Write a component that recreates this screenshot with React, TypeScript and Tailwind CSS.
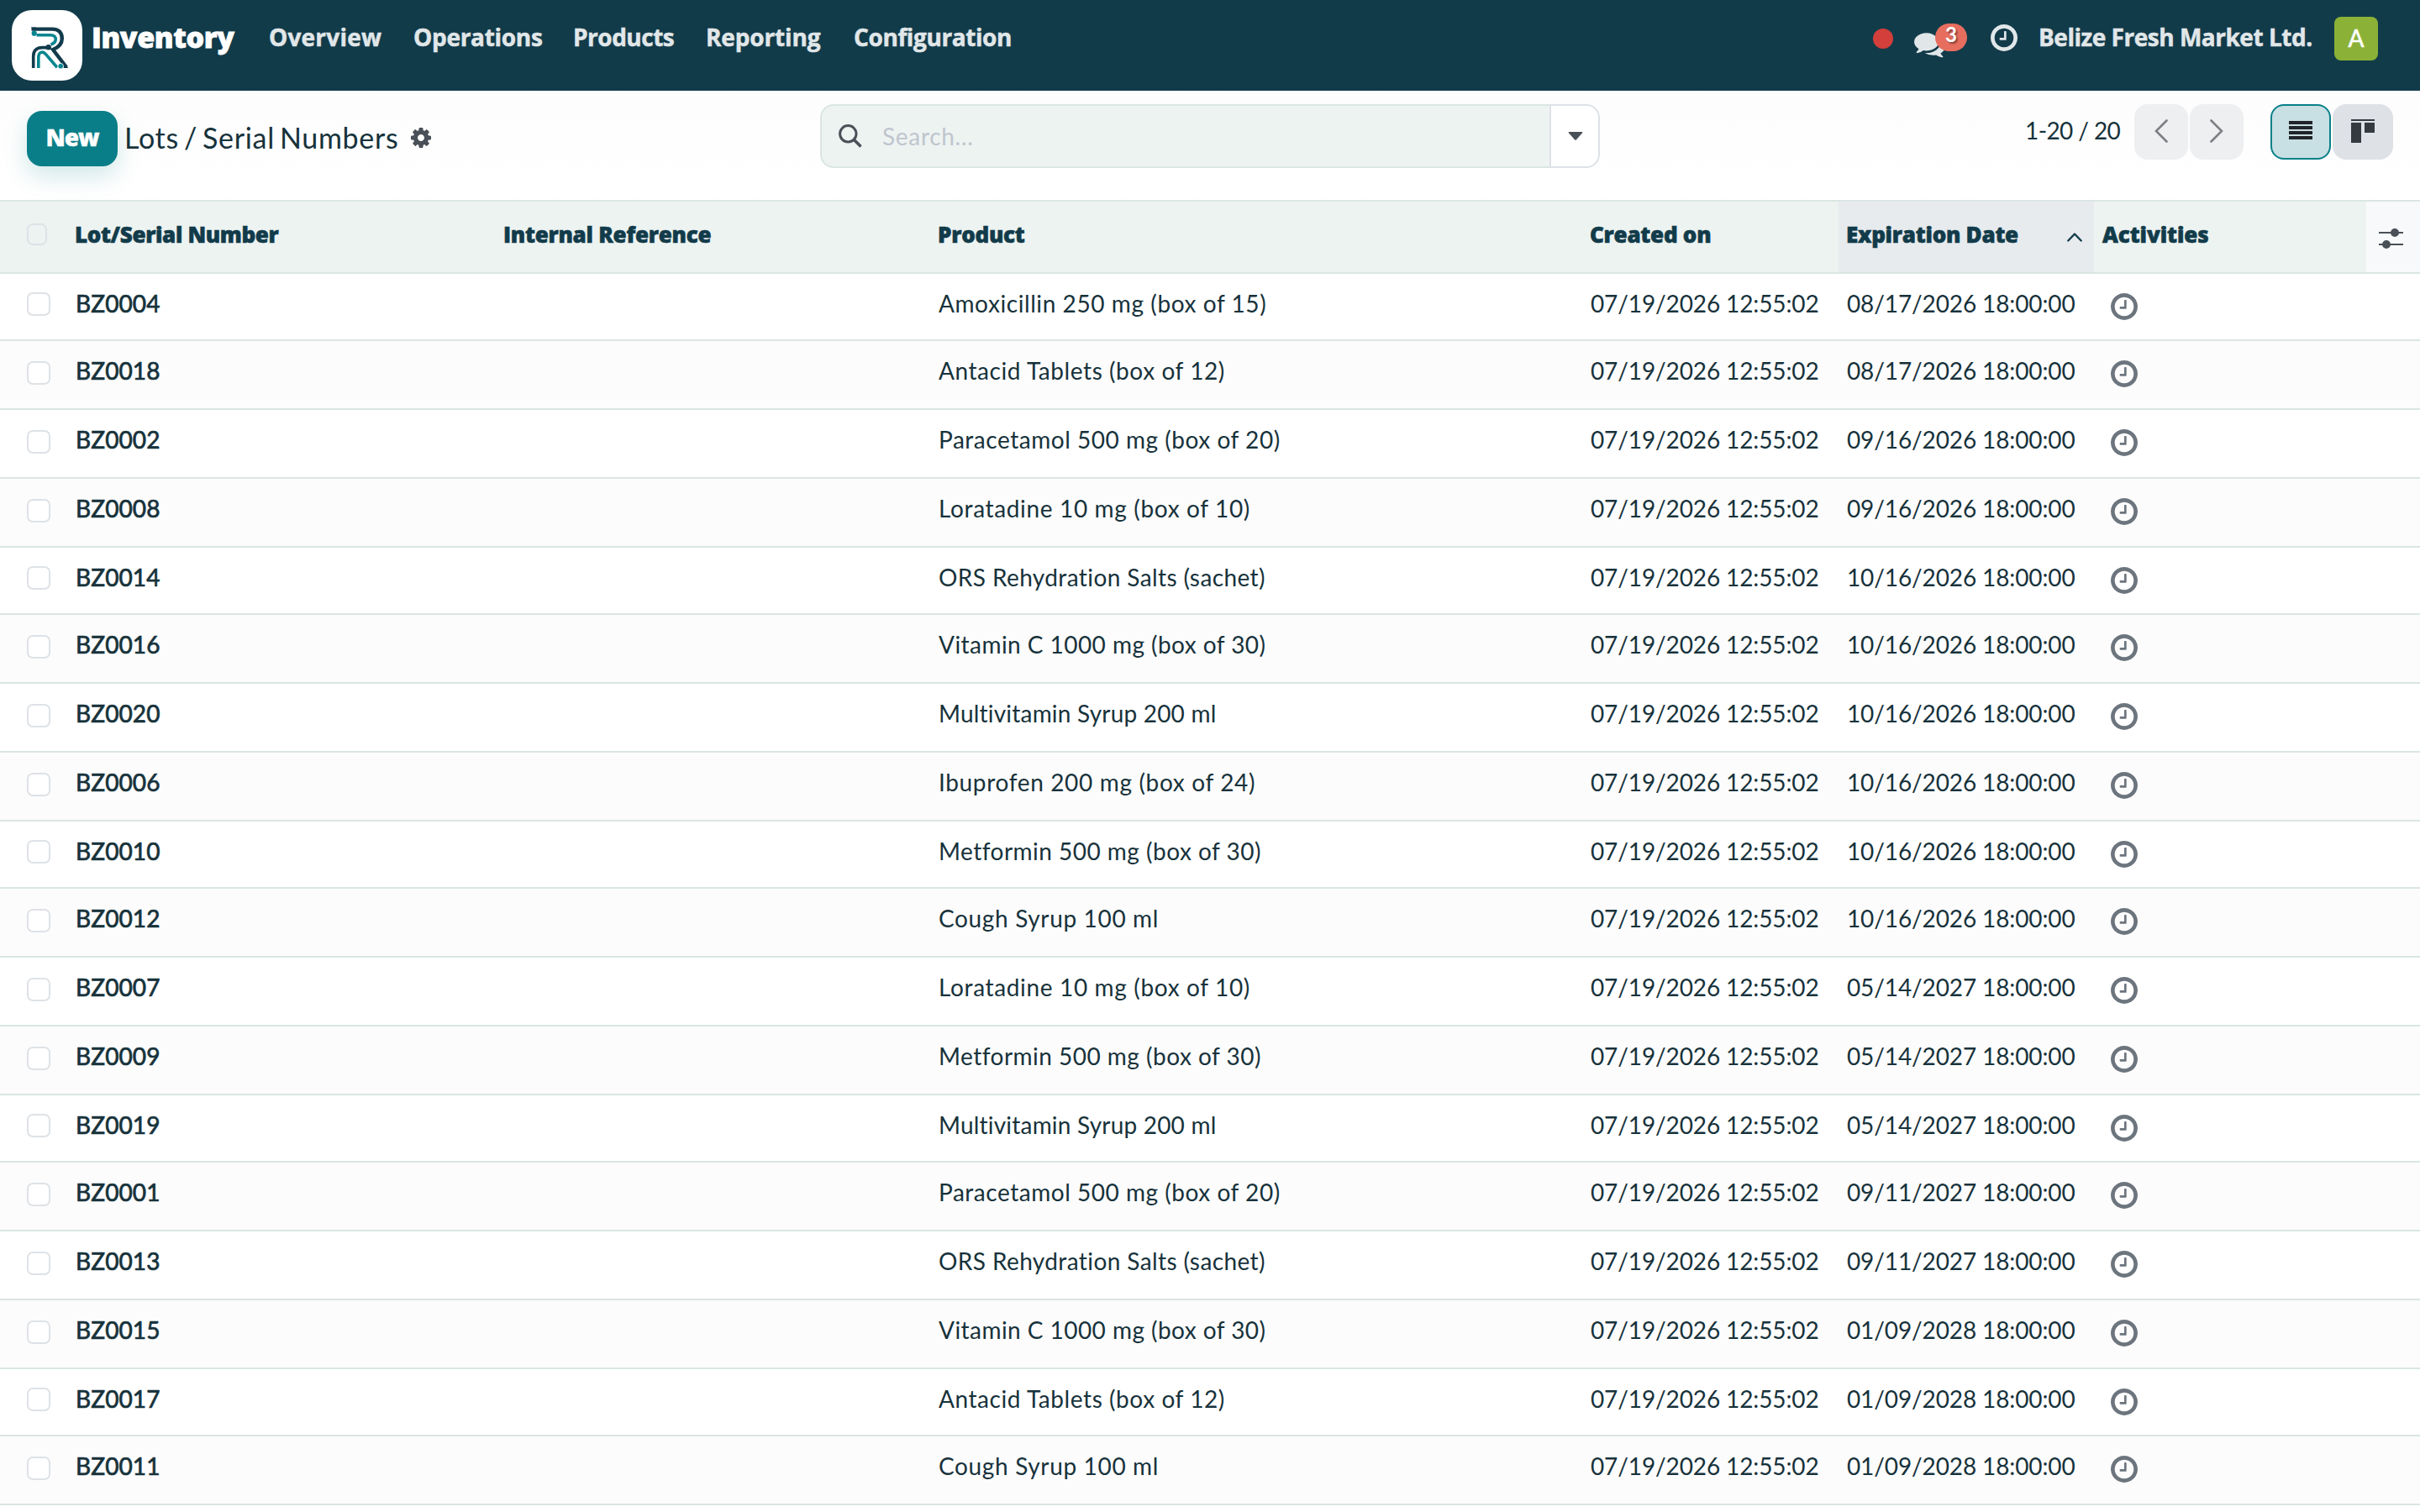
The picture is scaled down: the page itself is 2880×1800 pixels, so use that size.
import * as React from "react";
import clsx from "clsx";

const NAV_LINKS = [
  { label: "Overview", className: "w-[172px] tracking-[0.2px]" },
  { label: "Operations", className: "w-[190px] tracking-[-0.3px]" },
  { label: "Products", className: "w-[158px] tracking-[-0.5px]" },
  { label: "Reporting", className: "w-[176px] tracking-[-0.15px]" },
  { label: "Configuration", className: "w-[200px] tracking-[-0.4px]" },
];

const CREATED_ON = "07/19/2026 12:55:02";

const LOTS = [
  { lot: "BZ0004", product: "Amoxicillin 250 mg (box of 15)", expires: "08/17/2026 18:00:00" },
  { lot: "BZ0018", product: "Antacid Tablets (box of 12)", expires: "08/17/2026 18:00:00" },
  { lot: "BZ0002", product: "Paracetamol 500 mg (box of 20)", expires: "09/16/2026 18:00:00" },
  { lot: "BZ0008", product: "Loratadine 10 mg (box of 10)", expires: "09/16/2026 18:00:00" },
  { lot: "BZ0014", product: "ORS Rehydration Salts (sachet)", expires: "10/16/2026 18:00:00" },
  { lot: "BZ0016", product: "Vitamin C 1000 mg (box of 30)", expires: "10/16/2026 18:00:00" },
  { lot: "BZ0020", product: "Multivitamin Syrup 200 ml", expires: "10/16/2026 18:00:00" },
  { lot: "BZ0006", product: "Ibuprofen 200 mg (box of 24)", expires: "10/16/2026 18:00:00" },
  { lot: "BZ0010", product: "Metformin 500 mg (box of 30)", expires: "10/16/2026 18:00:00" },
  { lot: "BZ0012", product: "Cough Syrup 100 ml", expires: "10/16/2026 18:00:00" },
  { lot: "BZ0007", product: "Loratadine 10 mg (box of 10)", expires: "05/14/2027 18:00:00" },
  { lot: "BZ0009", product: "Metformin 500 mg (box of 30)", expires: "05/14/2027 18:00:00" },
  { lot: "BZ0019", product: "Multivitamin Syrup 200 ml", expires: "05/14/2027 18:00:00" },
  { lot: "BZ0001", product: "Paracetamol 500 mg (box of 20)", expires: "09/11/2027 18:00:00" },
  { lot: "BZ0013", product: "ORS Rehydration Salts (sachet)", expires: "09/11/2027 18:00:00" },
  { lot: "BZ0015", product: "Vitamin C 1000 mg (box of 30)", expires: "01/09/2028 18:00:00" },
  { lot: "BZ0017", product: "Antacid Tablets (box of 12)", expires: "01/09/2028 18:00:00" },
  { lot: "BZ0011", product: "Cough Syrup 100 ml", expires: "01/09/2028 18:00:00" },
];

const TRACKING: Record<string, string> = {
  "Amoxicillin 250 mg (box of 15)": "tracking-[0.58px]",
  "Antacid Tablets (box of 12)": "tracking-[0.57px]",
  "Paracetamol 500 mg (box of 20)": "tracking-[0.53px]",
  "ORS Rehydration Salts (sachet)": "tracking-[0.4px]",
  "Vitamin C 1000 mg (box of 30)": "tracking-[0.45px]",
  "Multivitamin Syrup 200 ml": "tracking-[0.2px]",
  "Metformin 500 mg (box of 30)": "tracking-[0.48px]",
};

const COLUMNS = "grid grid-cols-[88px_509px_518px_776px_297px_304px_324px_64px]";

function Logo() {
  return (
    <svg viewBox="0 0 84 84" className="h-[84px] w-[84px]" fill="none" strokeWidth="4.4">
      <path d="M23.5 22.6H48C57 22.6 59.8 28 59.8 34C59.8 41 55.5 44.5 49 47L65 68" stroke="#123b4c" />
      <path d="M22.8 20.4H29L27 24.8Z" fill="#123b4c" />
      <path d="M61.5 69H67.3L63 63.5Z" fill="#123b4c" />
      <path d="M29.5 29.8H46C51 29.8 52.6 32.5 52.2 35.5C51.8 38.6 49.5 40 46.5 41" stroke="#07858f" strokeWidth="3.6" />
      <path d="M25.7 69V55C25.7 48 30 44.6 36 44.6H43" stroke="#123b4c" strokeWidth="3.6" />
      <path d="M31.8 69V56.5C31.8 49.5 37 48.4 40.5 52.6L54 68.2" stroke="#07858f" strokeWidth="3.6" />
      <circle cx="26.7" cy="27.7" r="3.1" fill="#07858f" />
      <circle cx="43.7" cy="44.2" r="3.2" fill="#123b4c" />
      <circle cx="58.2" cy="66.7" r="3.3" fill="#07858f" stroke="#fff" strokeWidth="0.8" />
    </svg>
  );
}

function ClockIcon({ className }: { className?: string }) {
  return (
    <svg viewBox="0 128 1536 1536" className={className} fill="currentColor">
      <path d="M896 544v448q0 14-9 23t-23 9h-320q-14 0-23-9t-9-23v-64q0-14 9-23t23-9h224v-352q0-14 9-23t23-9h64q14 0 23 9t9 23zm416 352q0-148-73-273t-198-198-273-73-273 73-198 198-73 273 73 273 198 198 273 73 273-73 198-198 73-273zm224 0q0 209-103 385.5t-279.5 279.5-385.5 103-385.5-103-279.5-279.5-103-385.5 103-385.5 279.5-279.5 385.5-103 385.5 103 279.5 279.5 103 385.5z" />
    </svg>
  );
}

function CommentsIcon({ className }: { className?: string }) {
  return (
    <svg viewBox="0 0 1792 1792" className={className} fill="currentColor">
      <path d="M1408 768q0 139-94 257t-256.5 186.5-353.5 68.5q-86 0-176-16-124 88-278 128-36 9-86 16h-3q-11 0-20.5-8t-11.5-21q-1-3-1-6.5t.5-6.5 2-6l2.5-5 3.5-5.5 4-5 4.5-5 4-4.5q5-6 23-25t26-29.5 22.5-29 25-38.5 20.5-44q-124-72-195-177t-71-224q0-139 94-257t256.5-186.5 353.5-68.5 353.5 68.5 256.5 186.5 94 257zm384 256q0 120-71 224.5t-195 176.5q10 24 20.5 44t25 38.5 22.5 29 26 29.5 23 25q1 1 4 4.5t4.5 5 4 5 3.5 5.5l2.5 5 2 6 .5 6.5-1 6.5q-3 14-13 22t-22 7q-50-7-86-16-154-40-278-128-90 16-176 16-271 0-472-132 58 4 88 4 161 0 309-45t264-129q125-92 192-212t67-254q0-77-23-152 129 71 204 178t75 230z" />
    </svg>
  );
}

function GearIcon({ className }: { className?: string }) {
  return (
    <svg viewBox="0 128 1536 1536" className={className} fill="currentColor">
      <path d="M1024 896q0-106-75-181t-181-75-181 75-75 181 75 181 181 75 181-75 75-181zm512-109v222q0 12-8 23t-20 13l-185 28q-19 54-39 91 35 50 107 138 10 12 10 25t-9 23q-27 37-99 108t-94 71q-12 0-26-9l-138-108q-44 23-91 38-16 136-29 186-7 28-36 28h-222q-14 0-24.5-8.5t-11.5-21.5l-28-184q-49-16-90-37l-141 107q-10 9-25 9-14 0-25-11-126-114-165-168-7-10-7-23 0-12 8-23 15-21 51-66.5t54-70.5q-27-50-41-99l-183-27q-13-2-21-12.5t-8-23.5v-222q0-12 8-23t19-13l186-28q14-46 39-92-40-57-107-138-10-12-10-24 0-10 9-23 26-36 98.500-107.500t94.500-71.500q13 0 26 10l138 107q44-23 91-38 16-136 29-186 7-28 36-28h222q14 0 24.500 8.500t11.500 21.500l28 184q49 16 90 37l142-107q9-9 24-9 13 0 25 10 129 119 165 170 7 8 7 22 0 12-8 23-15 21-51 66.500t-54 70.500q26 50 41 98l183 28q13 2 21 12.500t8 23.500z" />
    </svg>
  );
}

function Navbar() {
  return (
    <header className="flex h-[108px] items-start bg-[#123b4a] font-['Open_Sans',sans-serif] text-[28px] font-bold leading-[88px] whitespace-nowrap text-[#e1e7e9]">
      <div className="mt-3 ml-[14px] h-[84px] w-[84px] rounded-[24px] bg-white">
        <Logo />
      </div>
      <div className="ml-[11px] w-[211px] text-[34px] font-extrabold tracking-[-0.4px] text-white [-webkit-text-stroke:0.8px_white]">
        Inventory
      </div>
      <nav className="flex [-webkit-text-stroke:0.5px_#e1e7e9]">
        {NAV_LINKS.map((link) => (
          <a key={link.label} className={link.className}>
            {link.label}
          </a>
        ))}
      </nav>

      <div className="mr-[50px] ml-auto flex">
        <span className="mt-[34px] h-6 w-6 rounded-full bg-[#d33f3a]" />
        <div className="relative mt-[34px] ml-[25px] h-[37px] w-[63px]">
          <CommentsIcon className="h-[37px] w-[37px]" />
          <span className="absolute -top-[6px] left-[25px] h-[33px] w-[38px] rounded-full bg-[#e76e5f] text-center font-['Lato',sans-serif] text-[24px] leading-[26px] text-white [text-shadow:2px_2px_2px_rgba(0,0,0,0.4)]">
            3
          </span>
        </div>
        <ClockIcon className="mt-[29px] ml-7 h-8 w-8" />
        <div className="ml-[25px] w-[352px] tracking-[-0.48px] [-webkit-text-stroke:0.5px_#e1e7e9]">
          Belize Fresh Market Ltd.
        </div>
        <div className="mt-5 h-[52px] w-[52px] rounded-lg bg-[#8bb236] text-center font-['Lato',sans-serif] font-normal leading-[51px] text-white [-webkit-text-stroke:0.6px_white]">
          A
        </div>
      </div>
    </header>
  );
}

function ControlPanel() {
  return (
    <div className="flex h-[130px] items-start bg-gradient-to-b from-[#fdfdfd] to-white whitespace-nowrap">
      <div className="flex w-[976px] pl-8">
        <button className="mt-6 h-[66px] w-[108px] rounded-[18px] bg-[#0a7e88] pb-[3px] font-['Open_Sans',sans-serif] text-[28px] leading-[63px] font-extrabold tracking-[-1px] text-white shadow-[0_12px_28px_rgba(10,126,136,0.18)] [-webkit-text-stroke:0.4px_white]">
          New
        </button>
        <h1 className="ml-2 w-[328px] text-[34px] leading-[111px] tracking-[0.7px] [word-spacing:-3.4px]">Lots / Serial Numbers</h1>
        <GearIcon className="mt-11 ml-[13px] h-6 w-6 text-[#495057]" />
      </div>

      <div className="mt-4 flex h-[76px] w-[928px]">
        <div className="flex w-[868px] rounded-l-[16px] border-2 border-r-0 border-[#dae6e2] bg-[#edf3f1]">
          <svg viewBox="0 0 28 28" className="mt-[22px] ml-5 h-7 w-7" fill="none" stroke="#495057" strokeWidth="3">
            <circle cx="11.3" cy="11.3" r="9.7" />
            <path d="M18.2 18.2L26.5 26.5" strokeWidth="3.6" />
          </svg>
          <span className="ml-6 text-[28px] leading-[73px] tracking-[0.7px] text-[#bfc5cf]">Search...</span>
        </div>
        <div className="w-[60px] rounded-r-[16px] border-2 border-[#dee2e6] bg-white">
          <svg viewBox="0 0 18 10" className="mt-[31px] ml-5 h-[10px] w-[18px]" fill="#495057">
            <path d="M1.5 0h15q1.500 0 .6 1.200L10 9.300q-1 1-2 0L.9 1.200Q0 0 1.500 0z" />
          </svg>
        </div>
      </div>

      <div className="mr-8 ml-auto flex">
        <span className="w-[130px] text-[28px] leading-[95px] tracking-[-0.6px]">1-20 / 20</span>
        <div className="mt-4 flex gap-[2px]">
          <button className="flex h-[66px] w-16 items-center justify-center rounded-[16px] bg-[#eeeff1]">
            <svg viewBox="0 0 16 28" className="mb-[2px] h-7 w-4" fill="none" stroke="#7c7f83" strokeWidth="2.6" strokeLinecap="round">
              <path d="M14.5 1.5L2 14L14.5 26.5" />
            </svg>
          </button>
          <button className="flex h-[66px] w-16 items-center justify-center rounded-[16px] bg-[#eeeff1]">
            <svg viewBox="0 0 16 28" className="mb-[2px] h-7 w-4" fill="none" stroke="#7c7f83" strokeWidth="2.6" strokeLinecap="round">
              <path d="M1.5 1.5L14 14L1.5 26.5" />
            </svg>
          </button>
        </div>
        <div className="mt-4 ml-8 flex gap-[2px]">
          <button className="h-[66px] w-[72px] rounded-[16px] border-2 border-[#09808a] bg-[#c8dfe3]">
            <svg viewBox="0 0 28 22" className="mb-1 ml-5 h-[22px] w-7" fill="#212529">
              <path d="M0 0h28v4H0zM0 6h28v4H0zM0 12h28v4H0zM0 18h28v4H0z" />
            </svg>
          </button>
          <button className="h-[66px] w-[72px] rounded-[16px] bg-[#dee2e6]">
            <svg viewBox="0 0 28 28" className="mb-[2px] ml-[22px] h-7 w-7" fill="#343a40">
              <path d="M0 0h28v2H0zM0 4h12v24H0zM16 4h12v12H16z" />
            </svg>
          </button>
        </div>
      </div>
    </div>
  );
}

function TableHead() {
  return (
    <div
      className={clsx(
        COLUMNS,
        "h-[88px] border-y-2 border-[#dae6e2] bg-[#edf3f1] font-['Open_Sans',sans-serif] text-[26px] leading-[78px] font-extrabold tracking-[-0.25px] text-[#123b4a] [-webkit-text-stroke:0.6px_#123b4a]"
      )}
    >
      <div className="pt-[26px] pl-8">
        <div className="h-[26px] w-6 rounded-[7px] border-2 border-[#dee2e6]" />
      </div>
      <div className="pl-px tracking-[-0.35px]">Lot/Serial Number</div>
      <div className="pl-[2px]">Internal Reference</div>
      <div className="pl-px">Product</div>
      <div className="pl-px">Created on</div>
      <div className="flex bg-[#e7ebee] pl-[9px]">
        Expiration Date
        <svg viewBox="0 0 18 11" className="mt-[37px] mr-[14px] ml-auto h-[11px] w-[18px]" fill="none" stroke="#123b4a" strokeWidth="2.4" strokeLinecap="round" strokeLinejoin="round">
          <path d="M1.3 9.5L9 1.5L16.700 9.500" />
        </svg>
      </div>
      <div className="pl-[10px] tracking-[-0.1px]">Activities</div>
      <div className="bg-[#f8f9fb] pt-8 pl-[15px]">
        <svg viewBox="0 0 29 24" className="h-6 w-[29px]" fill="#495057" stroke="#495057" strokeWidth="2">
          <path d="M0 5H29M0 19H29" />
          <circle cx="19" cy="5" r="4" />
          <circle cx="9" cy="19" r="4" />
        </svg>
      </div>
    </div>
  );
}

function LotRow({ lot, product, expires, index }: { lot: string; product: string; expires: string; index: number }) {
  // every fourth row is one step shorter
  const short = index % 4 === 0;
  return (
    <div
      className={clsx(
        COLUMNS,
        "border-b-2 border-[#dae6e2] text-[28px] leading-[71px]",
        short ? "h-[80px]" : "h-[82px]",
        index % 2 === 0 ? "bg-white" : "bg-[#fcfcfc]"
      )}
    >
      <div className={clsx("pl-8", short ? "pt-[22px]" : "pt-6")}>
        <div className="h-7 w-7 rounded-[7px] border-2 border-[#dee2e6] bg-white" />
      </div>
      <div className="pl-[2px] tracking-[0.1px] [-webkit-text-stroke:0.7px_#17323b]">{lot}</div>
      <div />
      <div className={clsx("pl-[2px]", TRACKING[product] ?? "tracking-[0.65px]")}>{product}</div>
      <div className="pl-[2px] tracking-[-0.12px]">{CREATED_ON}</div>
      <div className="pl-[10px] tracking-[-0.12px]">{expires}</div>
      <div className="pt-[23px] pl-5">
        <ClockIcon className="h-8 w-8 text-[#6c757d]" />
      </div>
    </div>
  );
}

export default function App() {
  return (
    <div className="h-[1800px] w-[2880px] overflow-hidden bg-white font-['Lato',sans-serif] text-[#17323b] [font-variant-ligatures:none]">
      <Navbar />
      <ControlPanel />
      <TableHead />
      {LOTS.map((row, i) => (
        <LotRow key={row.lot} {...row} index={i} />
      ))}
    </div>
  );
}
